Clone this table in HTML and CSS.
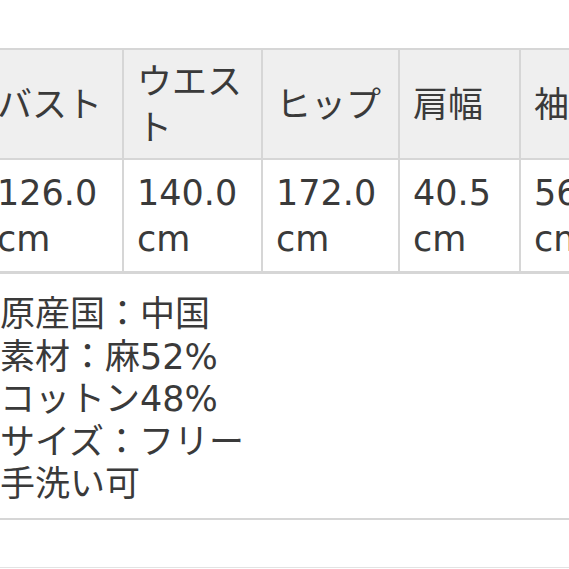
FILE: index.html
```html
<!DOCTYPE html>
<html lang="ja">
<head>
<meta charset="utf-8">
<title>サイズ表</title>
<link rel="stylesheet" href="styles.css">
</head>
<body>
<main class="sheet">
  <div class="size-table">
    <div class="cell head">バスト</div>
    <div class="cell head">ウエスト</div>
    <div class="cell head">ヒップ</div>
    <div class="cell head">肩幅</div>
    <div class="cell head">袖丈</div>
    <div class="cell val">126.0 cm</div>
    <div class="cell val">140.0 cm</div>
    <div class="cell val">172.0 cm</div>
    <div class="cell val">40.5 cm</div>
    <div class="cell val">56.0 cm</div>
    <div class="notes">
      <div>原産国：中国</div>
      <div>素材：麻52%</div>
      <div>コットン48%</div>
      <div>サイズ：フリー</div>
      <div>手洗い可</div>
    </div>
  </div>
  <div class="after"></div>
</main>
</body>
</html>
```

FILE: styles.css
```css
html, body {
  margin: 0;
  padding: 0;
  background: #ffffff;
  overflow: hidden;
}
body {
  width: 569px;
  height: 569px;
}
.sheet {
  padding-top: 48px;
  font-family: "DejaVu Sans", "Noto Sans CJK JP", sans-serif;
  font-size: 35px;
  color: #3a3a3a;
}
.size-table {
  display: grid;
  grid-template-columns: 141px 139px 137px 121px 160px;
  width: 698px;
  margin-left: -17px;
  border-top: 2px solid #d6d6d6;
}
.cell {
  border-right: 2px solid #d6d6d6;
  border-bottom: 2px solid #d6d6d6;
  padding: 0 10px 0 13px;
  line-height: 46px;
  display: flex;
  flex-direction: column;
  justify-content: center;
}
.head {
  background: #efefef;
  height: 106px;
  box-sizing: content-box;
  padding-top: 2px;
  padding-bottom: 0;
}
.head:nth-child(2) {
  justify-content: flex-start;
  padding-top: 9px;
  height: 99px;
}
.val {
  background: #ffffff;
  height: 110px;
  box-sizing: content-box;
  padding-top: 1px;
  padding-bottom: 0;
}
.size-table .cell:nth-child(1),
.size-table .cell:nth-child(6) {
  padding-left: 14px;
}
.notes {
  grid-column: 1 / -1;
  border-top: 1px solid #d6d6d6;
  border-bottom: 2px solid #d6d6d6;
  padding: 19px 0 12px 17px;
  line-height: 42.5px;
}
.notes div {
  white-space: nowrap;
  height: 42.5px;
}
.after {
  height: 47px;
  border-bottom: 1px solid #e3e3e3;
}
```
